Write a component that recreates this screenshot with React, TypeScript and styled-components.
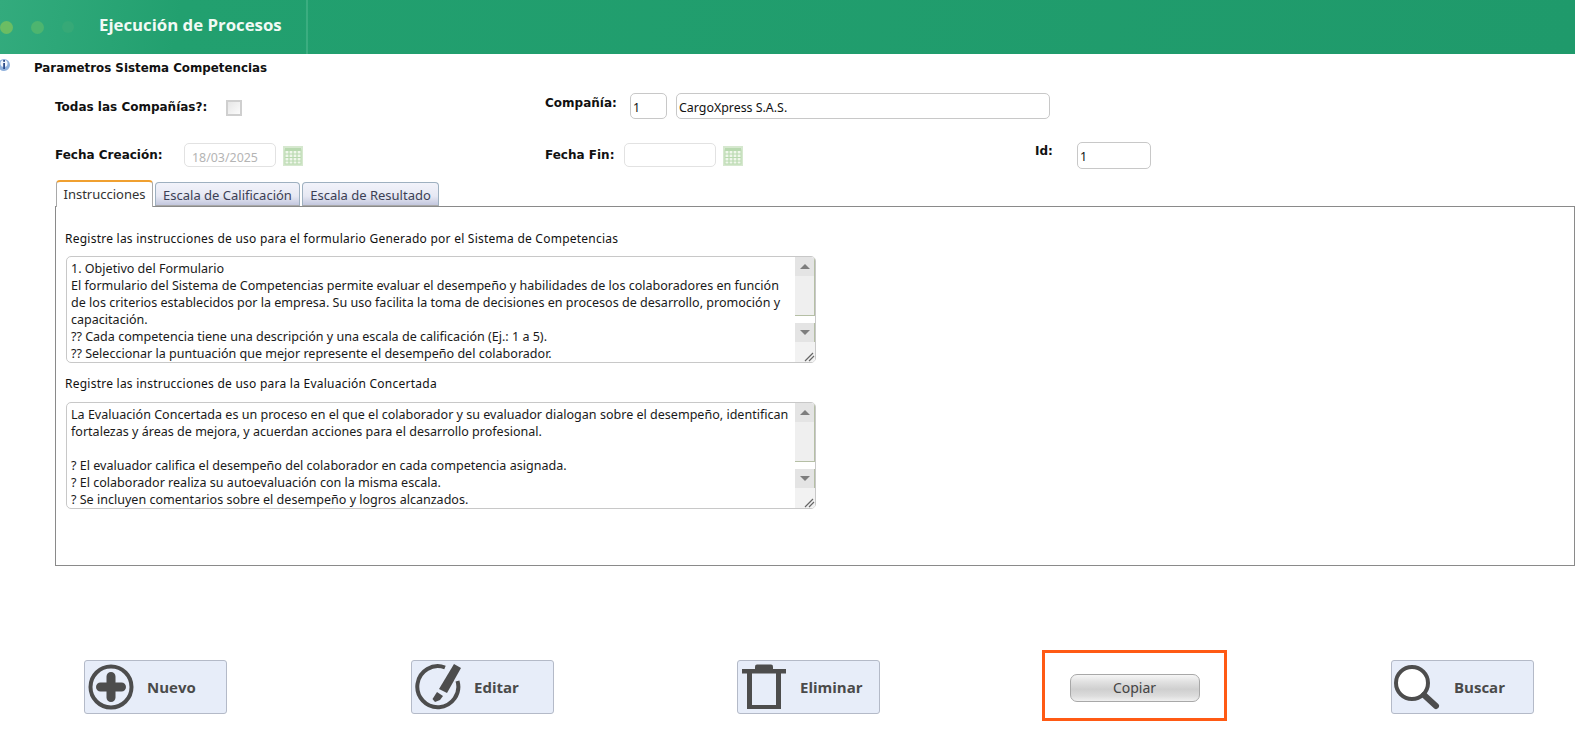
import React from "react";
import styled, { createGlobalStyle } from "styled-components";

const Global = createGlobalStyle`
  html, body { margin: 0; padding: 0; background: #fff; }
  body { font-family: "Noto Sans", "Open Sans", sans-serif; color: #111; overflow: hidden; }
`;
const Page = styled.div`width: 1575px; height: 736px; display: flex; flex-direction: column;`;
const Header = styled.header`
  height: 54px; flex: none; display: flex; align-items: center;
  background: linear-gradient(100deg, #33ab7d 0, #22a06f 180px, #1f9a6b 100%);
`;
const TitlePanel = styled.div`
  width: 306px; height: 54px; display: flex; align-items: center;
  border-right: 2px solid #3bad80; box-sizing: content-box;
`;
const Dot = styled.span<{ $c: string; $s: number; $ml: number }>`
  width: ${p => p.$s}px; height: ${p => p.$s}px; border-radius: 50%; background: ${p => p.$c};
  margin-left: ${p => p.$ml}px; flex: none; filter: blur(0.6px);
`;
const Title = styled.h1`
  margin: -4px 0 0 25px; color: #f1faf5; font: 700 16.8px/20px "Open Sans", sans-serif; white-space: nowrap;
`;
const SubTitleRow = styled.div`height: 26px; display: flex; align-items: center; padding-top: 1px; box-sizing: border-box;`;
const InfoIcon = styled.svg`width: 11px; height: 14px; margin: -6px 23px 0 0; flex: none;`;
const SubTitle = styled.h2`margin: 0; font: 700 11.85px/16px "DejaVu Sans", sans-serif; color: #111;`;
const FormRow = styled.div<{ $h: number; $mt: number }>`
  height: ${p => p.$h}px; margin-top: ${p => p.$mt}px; display: flex; align-items: center;
`;
const Label = styled.label<{ $w: number; $ml: number; $top?: number }>`
  width: ${p => p.$w}px; margin-left: ${p => p.$ml}px; flex: none;
  font: 700 12px/16px "DejaVu Sans", sans-serif; color: #111; white-space: nowrap;
  margin-top: ${p => p.$top ?? 0}px;
`;
const Check = styled.span`
  width: 16px; height: 16px; box-sizing: border-box; border: 2px solid #cfcfcf; background: linear-gradient(135deg,#e6e6e6,#fbfbfb); flex: none; margin-top: 3px;
`;
const Input = styled.div<{ $w: number; $ml: number; $h?: number; $off?: boolean; $dim?: boolean }>`
  width: ${p => p.$w}px; height: ${p => p.$h ?? 27}px; margin-left: ${p => p.$ml}px; flex: none; box-sizing: border-box;
  border: 1px solid ${p => (p.$dim ? "#e2e2e2" : "#c8c8c8")}; border-radius: 5px; background: #fff;
  padding: 4px ${p => (p.$off ? 7 : 2)}px 0; font-size: 12.4px; line-height: 19px; color: ${p => (p.$off ? "#b4b4b4" : "#111")};
`;
const Cal = styled.svg`width: 20px; height: 20px; margin: 2px 0 0 7px; flex: none;`;
const Tabs = styled.div`display: flex; margin: 12px 0 0 56px; height: 26px; align-items: flex-end; gap: 2px; position: relative; z-index: 1;`;
const Tab = styled.div<{ $active?: boolean; $w: number }>`
  width: ${p => p.$w}px; box-sizing: border-box; text-align: center; font-size: 13px; color: ${p => (p.$active ? "#333" : "#3c3f55")};
  line-height: 24px; border-radius: 4px 4px 0 0; white-space: nowrap;
  ${p => p.$active
    ? "background:#fff;border:1px solid #a9a9a9;border-top:2px solid #f0a030;border-bottom:0;height:27px;margin-bottom:-1px;"
    : "height:24px;background:linear-gradient(#f2f3fa,#e6e8f3 60%,#c3c7de);border:1px solid #9eb0c0;border-bottom:1px solid #a9a9a9;"}
`;
const Panel = styled.section`
  margin-left: 55px; width: 1520px; height: 360px; box-sizing: border-box; border: 1px solid #8a8a8a; padding: 22px 10px 0;
`;
const Caption = styled.p<{ $mt?: number }>`margin: ${p => p.$mt ?? 0}px 0 0 -1px; font-size: 12px; line-height: 19px; color: #111; letter-spacing: 0.02em; height: 19px; white-space: nowrap;`;
const TextBox = styled.div<{ $mt: number }>`
  width: 750px; height: 107px; margin-top: ${p => p.$mt}px; box-sizing: border-box; border: 1px solid #c8c8c8; border-radius: 5px; display: flex; overflow: hidden;
`;
const BoxText = styled.div`
  flex: 1; padding: 3px 0 0 4px; font-size: 12.55px; line-height: 17px; color: #1a1a1a; overflow: hidden;
`;
const Line = styled.div`white-space: pre;`;
const Scroll = styled.div`width: 20px; display: flex; flex-direction: column; flex: none; background: #fff;`;
const ScrollBtn = styled.div`height: 19px; background: #e4e4e4; border-right: 1px solid #b5bfa5; display: flex; align-items: center; justify-content: center;`;
const Arrow = styled.span<{ $down?: boolean }>`
  width: 0; height: 0; border-left: 5px solid transparent; border-right: 5px solid transparent;
  ${p => (p.$down ? "border-top: 5px solid #7d7d7d;" : "border-bottom: 5px solid #7d7d7d;")}
`;
const Thumb = styled.div`height: 40px; background: #efefef; border-right: 1px solid #b5bfa5; border-bottom: 1px solid #b5bfa5; box-sizing: border-box;`;
const Gap = styled.div`height: 7px;`;
const Grip = styled.div`flex: 1; background: #f2f2f2; display: flex; align-items: flex-end; justify-content: flex-end;`;
const Footer = styled.footer`display: flex; align-items: center; margin-top: 84px; height: 71px; padding-left: 84px;`;
const Action = styled.button<{ $ml: number }>`
  width: 143px; height: 54px; margin: 2px 0 0 ${p => p.$ml}px; flex: none; box-sizing: border-box; padding: 0 0 0 2px;
  background: #e7edf9; border: 1px solid #b4bac8; border-radius: 3px; display: flex; align-items: center; cursor: pointer;
  font: 700 15px/20px "Open Sans", sans-serif; color: #4a4a4a;
`;
const ActionIcon = styled.svg`width: 48px; height: 48px; flex: none;`;
const ActionText = styled.span`margin-left: 12px;`;
const Highlight = styled.div`
  width: 185px; height: 71px; margin-left: 162px; flex: none; box-sizing: border-box; border: 3px solid #ff5a14; display: flex; align-items: center; justify-content: center;
`;
const Copy = styled.button`
  width: 130px; height: 28px; margin-top: 4px; border: 1px solid #a8a8a8; border-radius: 7px; font: 400 14px/20px "Noto Sans", sans-serif; color: #444; padding: 0;
  background: linear-gradient(#f6f6f6 0, #e2e2e2 25%, #cfcfcf 55%, #dcdcdc 80%, #f0f0f0 100%); cursor: pointer;
`;

const CalIcon = () => (
  <Cal viewBox="0 0 20 20">
    <rect x="0" y="0" width="20" height="20" fill="#d6e8cf" />
    <rect x="2" y="4" width="16" height="14" fill="#f0f7ec" stroke="#b9d9b0" />
    <path d="M6 4v14M10 4v14M14 4v14M2 8h16M2 11.5h16M2 15h16" stroke="#b9d9b0" strokeWidth="1.2" />
    <rect x="2" y="2" width="16" height="3" fill="#b9d9b0" />
  </Cal>
);

const Grey = "#4d4d4d";
const text1 = [
  "1. Objetivo del Formulario",
  "El formulario del Sistema de Competencias permite evaluar el desempeño y habilidades de los colaboradores en función",
  "de los criterios establecidos por la empresa. Su uso facilita la toma de decisiones en procesos de desarrollo, promoción y",
  "capacitación.",
  "?? Cada competencia tiene una descripción y una escala de calificación (Ej.: 1 a 5).",
  "?? Seleccionar la puntuación que mejor represente el desempeño del colaborador.",
];
const text2 = [
  "La Evaluación Concertada es un proceso en el que el colaborador y su evaluador dialogan sobre el desempeño, identifican",
  "fortalezas y áreas de mejora, y acuerdan acciones para el desarrollo profesional.",
  " ",
  "? El evaluador califica el desempeño del colaborador en cada competencia asignada.",
  "? El colaborador realiza su autoevaluación con la misma escala.",
  "? Se incluyen comentarios sobre el desempeño y logros alcanzados.",
];

const ScrollBar = () => (
  <Scroll>
    <ScrollBtn><Arrow /></ScrollBtn>
    <Thumb />
    <Gap />
    <ScrollBtn><Arrow $down /></ScrollBtn>
    <Grip>
      <svg width="12" height="12" viewBox="0 0 12 12"><path d="M2 11 10 3M6 11l5-5" stroke="#666" strokeWidth="1.2" /></svg>
    </Grip>
  </Scroll>
);

export default function App() {
  return (
    <Page>
      <Global />
      <Header>
        <TitlePanel>
          <Dot $c="#6bbd63" $s={13} $ml={0} />
          <Dot $c="#4db56f" $s={13} $ml={18} />
          <Dot $c="#36a977" $s={12} $ml={18} />
          <Title>Ejecución de Procesos</Title>
        </TitlePanel>
      </Header>
      <SubTitleRow>
        <InfoIcon viewBox="0 0 11 14">
          <circle cx="4" cy="7" r="6" fill="#8fb0dc" />
          <circle cx="4" cy="5.5" r="3.5" fill="#f2f6fc" />
          <rect x="3.2" y="2" width="1.8" height="1.8" fill="#2c4c8a" />
          <rect x="3.2" y="5" width="1.8" height="6" fill="#2c4c8a" />
        </InfoIcon>
        <SubTitle>Parametros Sistema Competencias</SubTitle>
      </SubTitleRow>
      <FormRow $h={28} $mt={12}>
        <Label $w={171} $ml={55} $top={2}>Todas las Compañías?:</Label>
        <Check />
        <Label $w={85} $ml={303} $top={-6}>Compañía:</Label>
        <Input $w={37} $ml={0} $h={26}>1</Input>
        <Input $w={374} $ml={9} $h={26}>CargoXpress S.A.S.</Input>
      </FormRow>
      <FormRow $h={26} $mt={22}>
        <Label $w={129} $ml={55}>Fecha Creación:</Label>
        <Input $w={92} $ml={0} $h={24} $off $dim>18/03/2025</Input>
        <CalIcon />
        <Label $w={79} $ml={242}>Fecha Fin:</Label>
        <Input $w={92} $ml={0} $h={24} $dim></Input>
        <CalIcon />
        <Label $w={42} $ml={292} $top={-8}>Id:</Label>
        <Input $w={74} $ml={0} $h={27}>1</Input>
      </FormRow>
      <Tabs>
        <Tab $active $w={97}>Instrucciones</Tab>
        <Tab $w={145}>Escala de Calificación</Tab>
        <Tab $w={137}>Escala de Resultado</Tab>
      </Tabs>
      <Panel>
        <Caption>Registre las instrucciones de uso para el formulario Generado por el Sistema de Competencias</Caption>
        <TextBox $mt={8}>
          <BoxText>{text1.map((t, i) => <Line key={i}>{t}</Line>)}</BoxText>
          <ScrollBar />
        </TextBox>
        <Caption $mt={11}>Registre las instrucciones de uso para la Evaluación Concertada</Caption>
        <TextBox $mt={9}>
          <BoxText>{text2.map((t, i) => <Line key={i}>{t}</Line>)}</BoxText>
          <ScrollBar />
        </TextBox>
      </Panel>
      <Footer>
        <Action $ml={0}>
          <ActionIcon viewBox="0 0 48 48">
            <circle cx="24" cy="24" r="20.5" fill="none" stroke={Grey} strokeWidth="4" />
            <path d="M24 13.5v21M13.5 24h21" stroke={Grey} strokeWidth="9" strokeLinecap="round" />
          </ActionIcon>
          <ActionText>Nuevo</ActionText>
        </Action>
        <Action $ml={184}>
          <ActionIcon viewBox="0 0 48 48">
            <path d="M31 4.5A20.5 20.5 0 1 0 43.5 18" fill="none" stroke={Grey} strokeWidth="4" />
            <path d="M40 1 47 5 33 30 25 26Z" fill={Grey} />
            <path d="M23 29 29 33 26 37 21 39 18.5 36Z" fill={Grey} />
          </ActionIcon>
          <ActionText>Editar</ActionText>
        </Action>
        <Action $ml={183}>
          <ActionIcon viewBox="0 0 48 48">
            <path d="M2 6h44v4.5H2z" fill={Grey} />
            <path d="M15 6V3.5Q15 1.5 17 1.5H31Q33 1.5 33 3.5V6z" fill={Grey} />
            <path d="M7 10h34v36H7zM12 10v32h24V10z" fill={Grey} fillRule="evenodd" />
          </ActionIcon>
          <ActionText>Eliminar</ActionText>
        </Action>
        <Highlight><Copy>Copiar</Copy></Highlight>
        <Action $ml={164}>
          <ActionIcon viewBox="0 0 48 48">
            <circle cx="18" cy="20" r="16" fill="#fff" stroke={Grey} strokeWidth="4" />
            <path d="M30 32 42 43" stroke={Grey} strokeWidth="6" strokeLinecap="round" />
          </ActionIcon>
          <ActionText>Buscar</ActionText>
        </Action>
      </Footer>
    </Page>
  );
}
